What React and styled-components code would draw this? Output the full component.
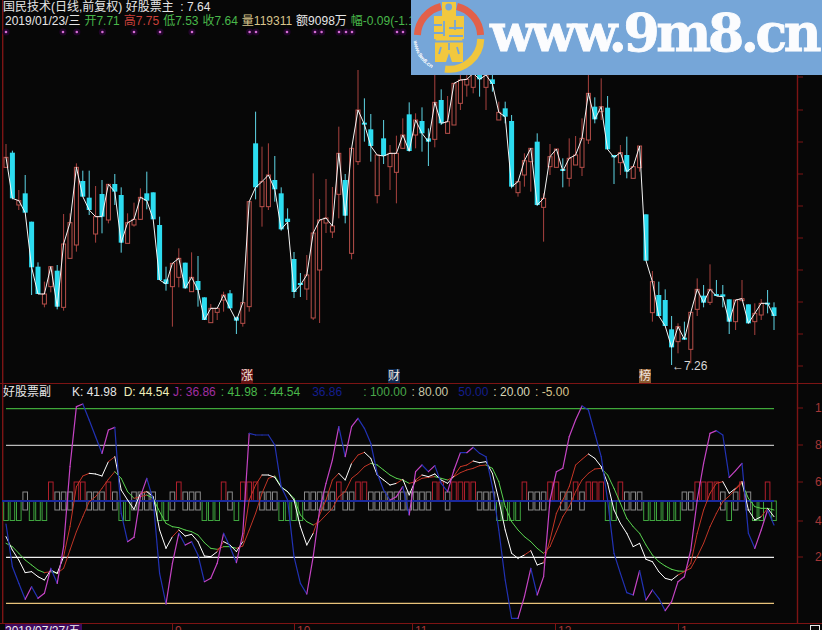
import React from "react";
import styled, { createGlobalStyle } from "styled-components";

const Global = createGlobalStyle`
  html, body { margin: 0; padding: 0; background: #070707; }
`;

const FONT = `"Liberation Sans", "Noto Sans CJK SC", sans-serif`;

const Screen = styled.div`
  position: relative;
  width: 822px;
  height: 630px;
  overflow: hidden;
  background: #070707;
  font-family: ${FONT};
  font-size: 12px;
  line-height: 14px;
  color: #e6e6e6;
  white-space: nowrap;
`;
const Pane = styled.section`
  position: relative;
  height: ${(p) => p.$h}px;
  border-bottom: 1px solid #7c1414;
`;
const Plot = styled.svg`
  display: block;
  width: 822px;
  height: ${(p) => p.$h}px;
`;
const PriceLegend = styled.div`
  position: absolute;
  top: 0;
  left: 3px;
  display: flex;
  flex-direction: column;
`;
const LegendRow = styled.div`
  display: flex;
  align-items: center;
  gap: ${(p) => p.$gap || 0}px;
  padding-left: ${(p) => p.$pad || 0}px;
  color: ${(p) => p.$c || "#e6e6e6"};
`;
const Quote = styled.span`
  color: ${(p) => p.$c};
`;
const IndicatorLegend = styled.div`
  position: absolute;
  top: 1px;
  left: 3px;
  display: flex;
  align-items: center;
`;
const LegendTitle = styled.span`
  width: 69px;
`;
const LegendItem = styled.span`
  color: ${(p) => p.$c};
  margin-right: ${(p) => p.$m || 6}px;
`;
const Badge = styled.span`
  position: absolute;
  top: 369px;
  left: ${(p) => p.$x}px;
  width: 12px;
  height: 14px;
  background: ${(p) => p.$bg};
  color: #f2e6e0;
`;
const LowNote = styled.span`
  position: absolute;
  top: 359px;
  left: 672px;
  color: #d8d8d8;
`;
const AxisLabel = styled.span`
  position: absolute;
  left: 815px;
  top: ${(p) => p.$y - 384 - 7}px;
  color: #a43636;
`;
const Banner = styled.aside`
  position: absolute;
  top: 0;
  right: 0;
  width: 411px;
  height: 75px;
  display: flex;
  align-items: center;
  background: #76a6d8;
  overflow: hidden;
`;
const Logo = styled.svg`
  flex: none;
  width: 79px;
  height: 75px;
`;
const Site = styled.span`
  font-family: "DejaVu Serif", serif;
  font-weight: 700;
  font-size: 52px;
  letter-spacing: -3.4px;
  line-height: 60px;
  color: #fbfcfe;
  -webkit-text-stroke: 0.8px #fbfcfe;
  margin-top: -9px;
`;
const TimeBar = styled.footer`
  display: flex;
  height: 6px;
  padding-left: 5px;
  overflow: hidden;
  position: relative;
`;
const DateChip = styled.span`
  flex: none;
  width: 77px;
  height: 6px;
  margin-right: 90px;
  background: #3e0a5e;
  color: #f0f0f0;
  line-height: 14px;
`;
const Tick = styled.span`
  flex: none;
  width: ${(p) => p.$w}px;
  box-sizing: border-box;
  border-left: 1px solid #7c1414;
  padding-left: 2px;
  color: #a43636;
  line-height: 14px;
`;
const Corner = styled.i`
  position: absolute;
  right: 2px;
  top: 1px;
  width: 8px;
  height: 8px;
  border: 1px solid #e8e8e8;
`;

const A = (base, rows) => rows.map(([k, t, b, h, l]) => ({
  k,
  t: base + t / 3,
  b: base + b / 3,
  h: base + h / 3,
  l: base + l / 3,
}));

const CANDLES = [
  ...A(80, [
    ["r",232,262,192,262],["c",218,355,212,358],["r",362,375,330,390],["c",340,398,285,398],
    ["c",425,562,425,645],["c",560,642,547,642],["r",642,672,605,682],["r",560,620,560,637],
    ["c",572,680,555,688],["r",492,682,402,692],["r",428,535,400,535],["r",262,495,250,515],
    ["c",303,350,272,350],["c",353,390,272,405],["r",410,462,318,488],["c",342,410,300,460],
    ["r",313,420,313,430],["c",312,335,282,375],["c",345,488,322,518],["r",428,490,400,490],
    ["r",418,435,368,440],["r",352,418,325,420],["c",340,362,275,388],["c",337,418,337,418],
    ["c",435,600,410,600],["c",598,612,560,632],["r",550,620,550,740],["r",535,592,505,622],
    ["c",548,625,548,625],["r",592,635,517,635],["c",603,630,528,680],["c",652,720,652,720],
    ["r",685,728,672,728],["r",685,697,685,720],["r",645,660,635,695],["c",640,685,630,685],
    ["c",712,722,710,762],["r",668,730,668,740],["r",365,680,365,695],["c",190,322,95,358],
    ["r",305,380,200,440],["r",285,380,190,390],
  ]),
  ...A(70, [
    ["c",330,358,258,395],["c",370,478,352,482],["c",446,456,415,478],["c",567,666,546,684],
    ["c",639,645,609,681],["r",615,657,555,690],["r",489,744,310,750],["r",450,600,387,759],
    ["r",444,459,327,489],["r",468,486,351,504],["r",250,373,170,445],["c",330,437,312,460],
    ["r",235,550,235,568],["r",120,275,0,285],["c",158,163,85,215],["c",178,228,132,275],
    ["r",255,377,255,400],["c",205,258,150,282],["r",250,290,225,360],["r",250,307,197,400],
    ["r",195,235,145,235],["c",133,243,97,245],["r",150,195,130,235],["c",153,190,112,245],
    ["c",205,215,175,288],["r",97,208,15,232],["c",90,160,58,165],["r",155,190,78,190],
    ["r",40,165,40,165],["r",30,100,15,120],["r",28,45,0,80],["r",10,52,0,70],
    ["c",10,28,10,80],["r",15,52,15,120],["c",28,42,15,65],["r",127,150,95,150],
    ["c",115,140,95,160],["c",153,350,135,355],["r",335,368,335,380],["r",272,315,250,350],
    ["r",235,275,235,365],["c",215,405,190,408],["r",385,412,370,515],
    ["r",260,290,222,315],["r",237,292,237,292],["c",297,303,265,352],["r",265,325,205,350],
    ["r",255,285,198,285],["r",205,292,145,318],["r",70,210,15,222],["c",110,148,82,160],
    ["r",110,125,25,150],["c",113,238,78,238],["c",255,262,255,342],["r",248,278,225,315],
    ["c",255,305,200,325],["r",290,325,290,325],["r",228,293,228,305],["c",433,572,433,572],
    ["r",635,728,603,755],["c",675,738,635,738],["c",690,768,658,768],["c",778,832,738,885],
    ["r",770,815,760,850],["c",803,808,755,808],["r",727,838,727,880],["r",658,718,625,738],
    ["c",677,698,645,712],["r",658,697,583,705],["c",672,678,630,678],["c",673,680,645,712],
    ["c",688,755,688,792],["r",690,755,690,780],["r",686,688,630,690],["c",703,760,703,760],
    ["r",730,755,700,795],["r",700,735,687,750],["c",698,700,660,730],["c",712,738,697,780],
  ]),
];

const X = (i) => 6 + 6.4 * i;
const Y = (z) => 400 + z / 3;

const J = [372,500,550,598,560,595,580,505,550,440,200,20,12,60,110,160,90,82,340,425,412,290,235,300,520,612,490,400,435,425,465,545,535,490,400,440,488,400,100,105,105,105,135,
  260,300,470,550,582,470,330,250,180,80,170,80,55,85,130,220,270,300,290,260,345,215,195,215,197,250,275,210,158,158,142,160,170,260,390,540,655,655,590,505,585,530,
  300,215,205,110,60,18,30,100,170,300,460,520,578,585,512,600,570,595,632,605,545,530,450,300,190,100,92,105,232,212,190,400,445,390,330,375];
const K = [410,450,480,518,515,530,540,510,520,470,380,260,228,220,222,228,185,170,270,300,328,280,275,290,390,445,410,390,408,403,425,468,470,455,425,435,455,425,300,255,225,225,232,
  262,275,300,380,435,400,345,300,240,220,240,190,165,157,175,225,240,255,250,238,285,240,225,230,222,240,250,228,200,195,183,188,185,220,300,390,460,475,465,452,495,488,
  420,340,300,260,195,178,162,175,200,250,330,370,400,440,430,478,485,515,535,540,525,515,490,400,330,280,250,245,280,265,245,330,360,350,325,350];
const D = [430,440,460,480,495,510,518,515,520,505,450,395,350,305,290,265,238,215,235,275,295,290,285,295,335,370,380,383,390,395,405,428,445,448,440,440,445,438,390,340,280,235,228,
  260,275,295,345,365,375,365,345,325,290,275,235,220,200,190,195,210,225,235,240,250,245,235,232,230,235,240,230,218,210,205,197,195,205,245,320,365,390,410,425,445,460,
  440,395,350,320,275,240,220,207,205,225,265,310,355,380,400,435,465,485,498,508,513,514,505,470,430,380,340,305,288,268,250,295,320,325,325,330];
const BARS = "GGGWGGGRWWWRRWWWRWGGWWWWGGWRWWWGGGRWGRRRWWW" +
  "GGGGWWWWWRWWRRWWWWWWWWWWRRWRRRRWWWGGGGRWWW" +
  "RRWWRWRRRGGRWWWGGGGGGWWRRRRWGWRWGGRG";
const DOTS = [6, 63, 76.8, 102.4, 134, 160, 192, 249.6, 256, 287, 315, 321.6, 339, 346, 352, 397, 403];
const UP_TICKS = [45, 77, 110, 142, 174, 206, 238, 270, 302, 334, 366];
const LOW_TICKS = [408, 445, 482, 521, 557];
const LEVELS = [
  [408.7, "#3fa83a"],
  [445.3, "#b9b9b9"],
  [557.3, "#f0f0f0"],
  [603.4, "#e8c27a"],
];
const BAR_STYLE = {
  R: { y: 482, h: 19, c: "#b01f2c" },
  G: { y: 501, h: 19.5, c: "#3fa53f" },
  W: { y: 492, h: 18, c: "#8a8a8a" },
};

function Segments({ data, up, down, width, pick }) {
  return data.slice(1).map((z, n) => {
    const rising = z < data[n];
    const color = pick ? pick(n + 1, rising) : rising ? up : down;
    return (
      <line key={n} x1={X(n)} y1={Y(data[n])} x2={X(n + 1)} y2={Y(z)}
        stroke={color} strokeWidth={width} strokeLinecap="round" />
    );
  });
}

function PriceChart() {
  const closes = CANDLES.map((c) => (c.k === "c" ? c.b : c.t));
  return (
    <Plot $h={383} viewBox="0 0 822 383">
      <line x1="2.7" y1="0" x2="2.7" y2="383" stroke="#7c1414" strokeWidth="1.4" />
      <line x1="797.5" y1="0" x2="797.5" y2="383" stroke="#7c1414" strokeWidth="1.4" />
      {UP_TICKS.map((y) => (
        <line key={y} x1="797" x2="803" y1={y} y2={y} stroke="#7c1414" />
      ))}
      {DOTS.map((x) => (
        <g key={x}>
          <circle cx={x} cy="32" r="3.6" fill="#22052a" />
          <circle cx={x} cy="32" r="1.3" fill="#d46cd4" />
        </g>
      ))}
      {CANDLES.map((c, i) => {
        const x = X(i);
        const wick = c.k === "c" ? "#5fd6e6" : "#a8423f";
        return (
          <g key={i}>
            <line x1={x} x2={x} y1={c.h} y2={c.l} stroke={wick} strokeWidth="1" />
            {c.k === "c" ? (
              <rect x={x - 2.5} y={c.t} width="5" height={Math.max(c.b - c.t, 2)} fill="#2cdcf0" />
            ) : (
              <rect x={x - 2} y={c.t} width="4" height={Math.max(c.b - c.t, 2)}
                fill="#070707" stroke="#b8504b" strokeWidth="1" />
            )}
          </g>
        );
      })}
      <polyline points={closes.map((y, i) => `${X(i)},${y}`).join(" ")}
        fill="none" stroke="#f6f6f6" strokeWidth="1" />
    </Plot>
  );
}

function IndicatorChart() {
  const kColor = (i, rising) =>
    rising && K[i - 1] < K[i - 2] ? "#c63626" : "#ffffff";
  return (
    <Plot $h={239} viewBox="0 384 822 239">
      <line x1="2.7" y1="384" x2="2.7" y2="623" stroke="#7c1414" strokeWidth="1.4" />
      <line x1="797.5" y1="384" x2="797.5" y2="623" stroke="#7c1414" strokeWidth="1.4" />
      {LOW_TICKS.map((y) => (
        <line key={y} x1="797" x2="803" y1={y} y2={y} stroke="#7c1414" />
      ))}
      {LEVELS.map(([y, c]) => (
        <line key={y} x1="6" x2="774" y1={y} y2={y} stroke={c} strokeWidth="1.2" />
      ))}
      {BARS.split("").map((k, i) => {
        const s = BAR_STYLE[k];
        return (
          <rect key={i} x={X(i) - 2.3} y={s.y} width="4.6" height={s.h}
            fill="none" stroke={s.c} strokeWidth="1" />
        );
      })}
      <line x1="2" x2="774" y1="501" y2="501" stroke="#1a289c" strokeWidth="2" />
      <Segments data={D} up="#bf3526" down="#59d24f" width={1} />
      <Segments data={K} pick={kColor} width={1} />
      <Segments data={J} up="#c544c4" down="#2232b4" width={1.2} />
    </Plot>
  );
}

function LogoMark() {
  return (
    <Logo viewBox="0 0 79 75">
      <defs>
        <path id="logoRim" d="M2.5 41 A35 35 0 0 0 27.5 71" />
      </defs>
      <path d="M6.4 35 A31 31 0 0 1 30 6.5" fill="none" stroke="#e2604a" strokeWidth="7" />
      <path d="M46 6.5 A31 31 0 0 1 69.6 35" fill="none" stroke="#e2604a" strokeWidth="7" />
      <path d="M69.8 39 A31.5 31.5 0 0 1 34 69" fill="none" stroke="#f0c63c" strokeWidth="7" />
      <text fontFamily="Liberation Sans, sans-serif" fontWeight="700" fontSize="5.6" fill="#ffffff">
        <textPath href="#logoRim">www.9m8.cn</textPath>
      </text>
      <path fill="#f2c83e" fillRule="evenodd"
        d="M31 2h14v14h8v23h-1.6v3H52v20h-11l-3-9-3 9H24V42h.6v-3H23V16h8z" />
      <circle cx="37.7" cy="7" r="3.4" fill="#76a6d8" />
      <g stroke="#76a6d8" strokeWidth="1.8" fill="none">
        <path d="M23 25h8M33 21v15M44 20v10M38 28h14M23 33h9M38 36h14" />
        <path d="M24 41.5h28M30 47l-2 7M46 47l2 7M38 43v7" />
      </g>
    </Logo>
  );
}

export default function App() {
  return (
    <Screen>
      <Global />
      <Pane $h={383}>
        <PriceChart />
        <PriceLegend>
          <LegendRow>国民技术(日线,前复权)&nbsp;好股票主&nbsp;&nbsp;:&nbsp;7.64</LegendRow>
          <LegendRow $gap={4} $pad={2}>
            <span>2019/01/23/三</span>
            <Quote $c="#49b84a">开7.71</Quote>
            <Quote $c="#c8403a">高7.75</Quote>
            <Quote $c="#49b84a">低7.53</Quote>
            <Quote $c="#49b84a">收7.64</Quote>
            <Quote $c="#d8c48c">量119311</Quote>
            <span>额9098万</span>
            <Quote $c="#49b84a">幅-0.09(-1.16%)</Quote>
          </LegendRow>
        </PriceLegend>
        <Badge $x={241} $bg="#641414">涨</Badge>
        <Badge $x={388} $bg="#0f2a50">财</Badge>
        <Badge $x={639} $bg="#8a5a30">榜</Badge>
        <LowNote>←7.26</LowNote>
      </Pane>
      <Pane $h={239}>
        <IndicatorChart />
        <IndicatorLegend>
          <LegendTitle>好股票副</LegendTitle>
          <LegendItem $c="#e6e6e6" $m={7}>K: 41.98</LegendItem>
          <LegendItem $c="#eeeeb8" $m={4}>D: 44.54</LegendItem>
          <LegendItem $c="#a02ea0" $m={5}>J: 36.86</LegendItem>
          <LegendItem $c="#49b84a">: 41.98</LegendItem>
          <LegendItem $c="#49b84a" $m={12}>: 44.54</LegendItem>
          <LegendItem $c="#141e8c" $m={21}>36.86</LegendItem>
          <LegendItem $c="#49a84a" $m={5}>: 100.00</LegendItem>
          <LegendItem $c="#c8c8a8" $m={10}>: 80.00</LegendItem>
          <LegendItem $c="#141e8c" $m={5}>50.00</LegendItem>
          <LegendItem $c="#d8d8b8" $m={5}>: 20.00</LegendItem>
          <LegendItem $c="#d8c48c">: -5.00</LegendItem>
        </IndicatorLegend>
        <AxisLabel $y={408}>100</AxisLabel>
        <AxisLabel $y={445}>80</AxisLabel>
        <AxisLabel $y={482}>60</AxisLabel>
        <AxisLabel $y={521}>40</AxisLabel>
        <AxisLabel $y={557}>20</AxisLabel>
      </Pane>
      <TimeBar>
        <DateChip>2018/07/27/五</DateChip>
        <Tick $w={122}>9</Tick>
        <Tick $w={118}>10</Tick>
        <Tick $w={143}>11</Tick>
        <Tick $w={123}>12</Tick>
        <Tick $w={100}>1</Tick>
        <Corner />
      </TimeBar>
      <Banner>
        <LogoMark />
        <Site>www.9m8.cn</Site>
      </Banner>
    </Screen>
  );
}
